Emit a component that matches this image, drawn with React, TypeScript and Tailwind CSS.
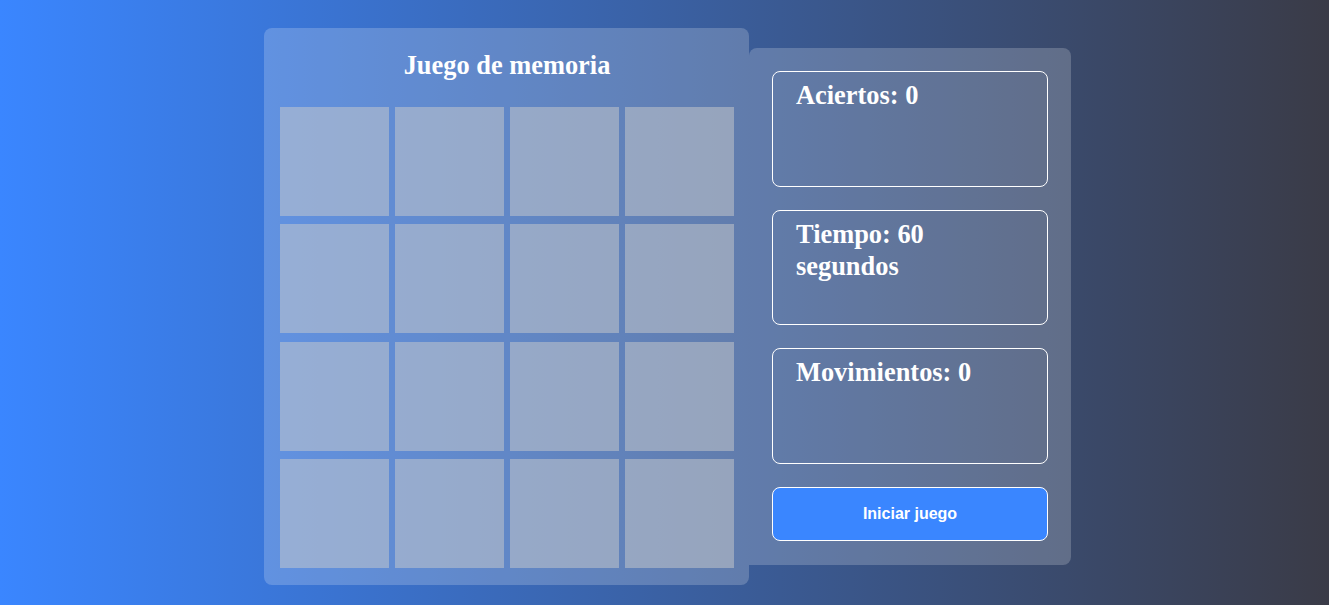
import React from "react";

export default function App() {
  const cards = Array.from({ length: 16 });
  const serif = { fontFamily: '"Liberation Serif", "Times New Roman", serif' };
  return (
    <div className="w-[1329px] h-[605px] overflow-hidden bg-[linear-gradient(to_right,#3a86ff,#3a3b47)] flex items-center justify-center pt-[8px] pl-[6px]">
      <div className="flex items-center">
        <div className="w-[485px] h-[557px] rounded-lg bg-white/20 pt-[22px] pl-[16px] pr-[15px]">
          <h1
            className="text-center text-white font-bold text-[26.4px] leading-[30px] mb-[27px]"
            style={serif}
          >
            Juego de memoria
          </h1>
          <div className="grid grid-cols-[repeat(4,109px)] grid-rows-[repeat(4,109px)] gap-x-[6px] gap-y-[8.3px]">
            {cards.map((_, i) => (
              <div key={i} className="bg-[rgba(204,204,204,0.5)]" />
            ))}
          </div>
        </div>
        <div className="w-[322px] h-[517px] rounded-r-lg rounded-tl-lg bg-white/20 p-[23px] flex flex-col gap-[23px]">
          {["Aciertos: 0", "Tiempo: 60 segundos", "Movimientos: 0"].map((t) => (
            <div
              key={t}
              className="h-[115.7px] rounded-lg border border-white px-[23px] pt-[7px]"
            >
              <h2 className="text-white font-bold text-[26.4px] leading-[32px]" style={serif}>
                {t}
              </h2>
            </div>
          ))}
          <button
            className="h-[54px] rounded-lg border border-white bg-[#3a86ff] text-white font-bold text-[16px]"
            style={{ fontFamily: '"Liberation Sans", Arial, sans-serif' }}
          >
            Iniciar juego
          </button>
        </div>
      </div>
    </div>
  );
}
